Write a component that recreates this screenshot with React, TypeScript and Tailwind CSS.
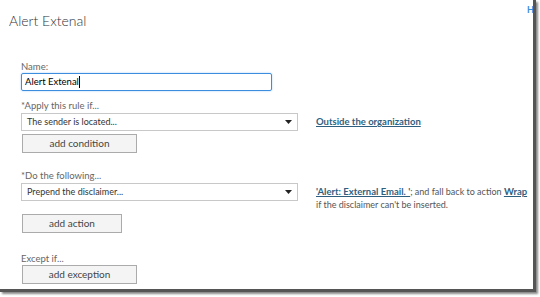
import React from "react";

function Caret() {
    return (
        <svg width="7" height="4" viewBox="0 0 7 4" className="shrink-0">
            <path d="M0 0h7L3.5 4z" fill="#222" />
        </svg>
    );
}

function Select({ text }: { text: string }) {
    return (
        <div className="shrink-0 w-[277px] h-[18px] border border-[#c8c8c8] bg-white flex items-center justify-between pl-[5px] pr-[5px]">
            <span className="text-[9px] text-[#333]">{text}</span>
            <Caret />
        </div>
    );
}

function Btn({ label, w }: { label: string; w: string }) {
    return (
        <div className={`${w} h-[19px] border border-[#ababab] bg-[#f4f4f4] flex items-center justify-center text-[10px] text-[#444]`}>
            {label}
        </div>
    );
}

export default function App() {
    return (
        <div className="w-[540px] h-[297px] bg-white overflow-hidden" style={{ fontFamily: 'Lato, "Open Sans", sans-serif' }}>
            <div className="w-[536px] h-[292px] bg-white border-r-[3px] border-b-[3px] border-[#555] shadow-[2px_2px_2px_#888] flex flex-col">
                <div className="flex justify-between items-start">
                    <h1 className="pl-[9px] pt-[11px] text-[14px] font-light text-[#333] leading-[20px]">Alert Extenal</h1>
                    <span className="text-[9px] text-[#3a8cdc] font-bold leading-none mt-[5px] -mr-[1px]">H</span>
                </div>

                <div className="pl-[21px] pt-[30px] flex flex-col">
                    <label className="text-[9.5px] text-[#666] leading-[12px]">Name:</label>
                    <div className="w-[251px] h-[18px] border border-[#3c8dde] rounded-[2px] shadow-[0_0_2px_#9cc8f2] flex items-center pl-[3px]">
                        <span className="text-[9.5px] text-black">Alert Extenal</span>
                        <span className="w-[1px] h-[12px] bg-black" />
                    </div>

                    <label className="mt-[9px] text-[9.5px] text-[#666] leading-[12px]">*Apply this rule if...</label>
                    <div className="mt-[1px] flex items-center">
                        <Select text="The sender is located..." />
                        <a className="ml-[18px] text-[9.5px] font-bold text-[#2f5f7f] underline">Outside the organization</a>
                    </div>
                    <div className="mt-[3px] ml-[1px]">
                        <Btn label="add condition" w="w-[115px]" />
                    </div>

                    <label className="mt-[17px] text-[9.5px] text-[#666] leading-[12px]">*Do the following...</label>
                    <div className="mt-[1px] h-[18px] flex items-start">
                        <Select text="Prepend the disclaimer..." />
                        <div className="ml-[18px] mt-[2px] text-[9px] text-[#555] leading-[13px] whitespace-nowrap">
                            <a className="text-[9.5px] font-bold text-[#2f5f7f] underline">'Alert: External Email. '</a>; and fall back to action <a className="text-[9.5px] font-bold text-[#2f5f7f] underline">Wrap</a>
                            <br />
                            if the disclaimer can't be inserted.
                        </div>
                    </div>
                    <div className="mt-[13px] ml-[1px]">
                        <Btn label="add action" w="w-[100px]" />
                    </div>

                    <label className="mt-[20px] text-[9.5px] text-[#666] leading-[12px]">Except if...</label>
                    <div className="ml-[1px]">
                        <Btn label="add exception" w="w-[115px]" />
                    </div>
                </div>
            </div>
        </div>
    );
}
